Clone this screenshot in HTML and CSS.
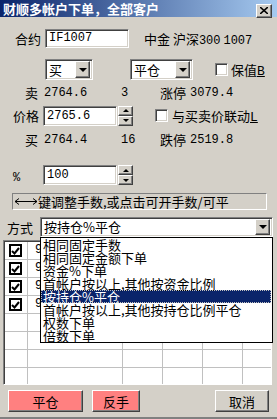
FILE: index.html
```html
<!DOCTYPE html>
<html lang="zh">
<head>
    <meta charset="UTF-8">
    <title>财顺多帐户下单</title>
    <link rel="stylesheet" href="styles.css">
</head>
<body>
    <div class="win">
        <div class="title">
            <span class="title-text">财顺多帐户下单，全部客户</span>
            <span class="btn close-btn">
                <svg width="8" height="7" viewBox="0 0 8 7"><path d="M0 0 L8 7 M8 0 L0 7" stroke="#000" stroke-width="1.6"/></svg>
            </span>
        </div>

        <div class="row r1">
            <span class="lbl">合约</span>
            <span class="field f-code"><span class="n">IF1007</span></span>
            <span class="info">中金 沪深<span class="n">300</span> <span class="n">1007</span></span>
        </div>

        <div class="row r2">
            <span class="field sel sel-buy">买<span class="btn drop"><i class="tri"></i></span></span>
            <span class="field sel sel-close">平仓<span class="btn drop"><i class="tri"></i></span></span>
            <span class="field chk chk-hedge"></span>
            <span class="chk-lbl">保值<u class="n">B</u></span>
        </div>

        <div class="row quote">
            <span class="c1">卖</span>
            <span class="c2 n">2764.6</span>
            <span class="c3 n">3</span>
            <span class="c4">涨停</span>
            <span class="n">3079.4</span>
        </div>

        <div class="row r4">
            <span class="lbl">价格</span>
            <span class="field f-num"><span class="n">2765.6</span></span>
            <span class="spin"><span class="btn"><i class="tri up"></i></span><span class="btn"><i class="tri sm"></i></span></span>
            <span class="field chk chk-link"></span>
            <span class="chk-lbl link-lbl">与买卖价联动<u class="n">L</u></span>
        </div>

        <div class="row quote q2">
            <span class="c1">买</span>
            <span class="c2 n">2764.4</span>
            <span class="c3 n">16</span>
            <span class="c4">跌停</span>
            <span class="n">2519.8</span>
        </div>

        <div class="row r6">
            <span class="lbl"><span class="n">%</span></span>
            <span class="field f-num"><span class="n">100</span></span>
            <span class="spin"><span class="btn"><i class="tri up"></i></span><span class="btn"><i class="tri sm"></i></span></span>
        </div>

        <div class="row hint">
            <svg width="24" height="9" viewBox="0 0 24 9"><path d="M1 4.5 H23 M1 4.5 L5 1.5 M1 4.5 L5 7.5 M23 4.5 L19 1.5 M23 4.5 L19 7.5" stroke="#000" stroke-width="1" fill="none"/></svg>
            <span>键调整手数,或点击可开手数/可平</span>
        </div>

        <div class="row r8">
            <span class="lbl">方式</span>
            <span class="field sel combo">按持仓%平仓<span class="btn drop"><i class="tri"></i></span></span>
        </div>

        <div class="grid">
            <table>
                <tr><td class="ck"><span class="gchk"><svg width="9" height="8" viewBox="0 0 9 8"><path d="M1 4 L3.5 6.5 L8 1" stroke="#000" stroke-width="2" fill="none"/></svg></span></td><td class="acc"><span class="n clip">98</span></td><td></td><td></td><td></td><td></td></tr>
                <tr><td class="ck"><span class="gchk"><svg width="9" height="8" viewBox="0 0 9 8"><path d="M1 4 L3.5 6.5 L8 1" stroke="#000" stroke-width="2" fill="none"/></svg></span></td><td class="acc"><span class="n clip">98</span></td><td></td><td></td><td></td><td></td></tr>
                <tr><td class="ck"><span class="gchk"><svg width="9" height="8" viewBox="0 0 9 8"><path d="M1 4 L3.5 6.5 L8 1" stroke="#000" stroke-width="2" fill="none"/></svg></span></td><td class="acc"><span class="n clip">98</span></td><td></td><td></td><td></td><td></td></tr>
                <tr><td class="ck"><span class="gchk"><svg width="9" height="8" viewBox="0 0 9 8"><path d="M1 4 L3.5 6.5 L8 1" stroke="#000" stroke-width="2" fill="none"/></svg></span></td><td class="acc"><span class="n clip">98</span></td><td></td><td></td><td></td><td></td></tr>
                <tr><td></td><td></td><td></td><td></td><td></td><td></td></tr>
                <tr><td></td><td></td><td></td><td></td><td></td><td></td></tr>
                <tr><td></td><td></td><td></td><td></td><td></td><td></td></tr>
                <tr><td></td><td></td><td></td><td></td><td></td><td></td></tr>
            </table>
        </div>

        <div class="row actions">
            <span class="btn act pink b-close">平仓</span>
            <span class="btn act pink b-rev">反手</span>
            <span class="btn act b-cancel">取消</span>
        </div>

        <!-- 下拉列表 -->
        <ul class="dropdown">
            <li>相同固定手数</li>
            <li>相同固定金额下单</li>
            <li>资金%下单</li>
            <li>首帐户按以上,其他按资金比例</li>
            <li class="sel-item">按持仓%平仓</li>
            <li>首帐户按以上,其他按持仓比例平仓</li>
            <li>权数下单</li>
            <li>倍数下单</li>
        </ul>
    </div>
</body>
</html>
```

FILE: styles.css
```css
body {
    margin: 0;
    background: #d4d0c8;
    font-family: "Noto Sans CJK SC", "Liberation Sans", sans-serif;
    font-size: 13px;
    color: #000;
}
.win {
    position: relative;
    width: 277px;
    height: 419px;
    background: #d4d0c8;
    box-sizing: border-box;
    border-bottom: 2px solid #808080;
    overflow: hidden;
}
.n {
    font-family: "Liberation Mono", monospace;
    font-size: 12px;
}
.title {
    height: 17px;
    background: linear-gradient(to right, #0a246a, #a6caf0);
    display: flex;
    align-items: center;
    padding-left: 3px;
    padding-right: 5px;
}
.title-text {
    color: #fff;
    font-weight: bold;
    font-size: 13px;
    line-height: 17px;
}
.btn {
    background: #d4d0c8;
    border: 1px solid;
    border-color: #fff #404040 #404040 #fff;
    box-shadow: inset -1px -1px #808080;
    box-sizing: border-box;
    display: flex;
    align-items: center;
    justify-content: center;
}
.close-btn {
    margin-left: auto;
    width: 16px;
    height: 14px;
    margin-top: 4px;
}
.row {
    display: flex;
    align-items: center;
}
.field {
    background: #fff;
    border: 1px solid;
    border-color: #808080 #fff #fff #808080;
    box-shadow: inset 1px 1px #404040, inset -1px -1px #d4d0c8;
    box-sizing: border-box;
    display: flex;
    align-items: center;
    padding-left: 3px;
    line-height: 14px;
}
.lbl {
    width: 30px;
    flex: none;
}
.r1 {
    margin-top: 11px;
    height: 20px;
    padding-left: 15px;
}
.f-code {
    width: 84px;
    height: 19px;
}
.info {
    margin-left: 15px;
}
.r2 {
    margin-top: 11px;
    height: 21px;
    padding-left: 45px;
}
.sel {
    height: 21px;
    padding-right: 2px;
}
.drop {
    margin-left: auto;
    width: 15px;
    height: 17px;
}
.tri {
    width: 0;
    height: 0;
    border-left: 4px solid transparent;
    border-right: 4px solid transparent;
    border-top: 4px solid #000;
}
.tri.up {
    border-top: none;
    border-bottom: 3px solid #000;
    border-left-width: 3px;
    border-right-width: 3px;
}
.tri.sm {
    border-top-width: 3px;
    border-left-width: 3px;
    border-right-width: 3px;
}
.sel-buy {
    width: 48px;
}
.sel-close {
    width: 63px;
    margin-left: 37px;
}
.chk {
    width: 13px;
    height: 13px;
    padding: 0;
}
.chk-hedge {
    margin-left: 22px;
}
.chk-lbl {
    margin-left: 3px;
}
.chk-lbl u {
    font-size: 13px;
}
.quote {
    margin-top: 5px;
    height: 15px;
    padding-left: 25px;
}
.q2 {
    margin-top: 6px;
}
.c1 { width: 19px; }
.c2 { width: 77px; }
.c3 { width: 39px; }
.c4 { width: 30px; }
.r4 {
    margin-top: 5px;
    height: 21px;
    padding-left: 13px;
}
.f-num {
    width: 74px;
    height: 20px;
}
.spin {
    margin-left: 1px;
    width: 15px;
    height: 20px;
    display: flex;
    flex-direction: column;
}
.spin .btn {
    height: 10px;
}
.chk-link {
    margin-left: 22px;
}
.link-lbl {
    margin-left: 4px;
}
.r6 {
    margin-top: 18px;
    height: 20px;
    padding-left: 13px;
}
.hint {
    margin: 8px 0 0 12px;
    width: 255px;
    height: 17px;
    box-sizing: border-box;
    border: 1px solid;
    border-color: #808080 #fff #fff #808080;
    padding-left: 1px;
    line-height: 14px;
}
.r8 {
    margin-top: 7px;
    height: 20px;
    padding-left: 7px;
}
.r8 .lbl {
    width: 33px;
}
.combo {
    width: 233px;
    height: 20px;
}
.combo .drop {
    height: 16px;
}
.grid {
    margin: 3px 0 0 3px;
    width: 269px;
    height: 145px;
    background: #fff;
    box-sizing: border-box;
    border: 1px solid;
    border-color: #808080 #fff #fff #808080;
    box-shadow: inset 1px 1px #404040;
    padding: 1px 0 0 1px;
    overflow: hidden;
}
.grid table {
    border-collapse: collapse;
    table-layout: fixed;
    width: 272px;
}
.grid td {
    height: 17px;
    padding: 0;
    border-right: 1px solid #c0c0c0;
    border-bottom: 1px solid #c0c0c0;
    line-height: 17px;
}
.grid td:nth-child(1) { width: 18px; }
.grid td:nth-child(2) { width: 87px; }
.grid td:nth-child(3),
.grid td:nth-child(4),
.grid td:nth-child(5) { width: 39px; }
.grid td.ck {
    padding-left: 4px;
}
.gchk {
    width: 13px;
    height: 13px;
    box-sizing: border-box;
    border: 2px solid #000;
    background: #fff;
    display: flex;
    align-items: center;
    justify-content: center;
}
.acc {
    padding-left: 7px !important;
    white-space: nowrap;
    overflow: hidden;
}
.clip {
    display: inline-block;
    width: 10px;
    overflow: hidden;
    vertical-align: top;
}
.actions {
    margin-top: 5px;
    height: 22px;
    padding-left: 8px;
}
.act {
    height: 22px;
}
.pink {
    background: #ff8080;
}
.b-close { width: 75px; }
.b-rev { width: 48px; margin-left: 9px; }
.b-cancel { width: 54px; margin-left: 75px; }
.dropdown {
    position: absolute;
    left: 40px;
    top: 237px;
    width: 233px;
    margin: 0;
    padding: 0;
    list-style: none;
    background: #fff;
    border: 1px solid #000;
    box-sizing: border-box;
}
.dropdown li {
    height: 13px;
    line-height: 13px;
    padding-left: 2px;
    white-space: nowrap;
}
.dropdown .sel-item {
    background: #0a246a;
    color: #fff;
    outline: 1px dotted #c0c0c0;
    outline-offset: -1px;
    margin-right: 1px;
}
```
